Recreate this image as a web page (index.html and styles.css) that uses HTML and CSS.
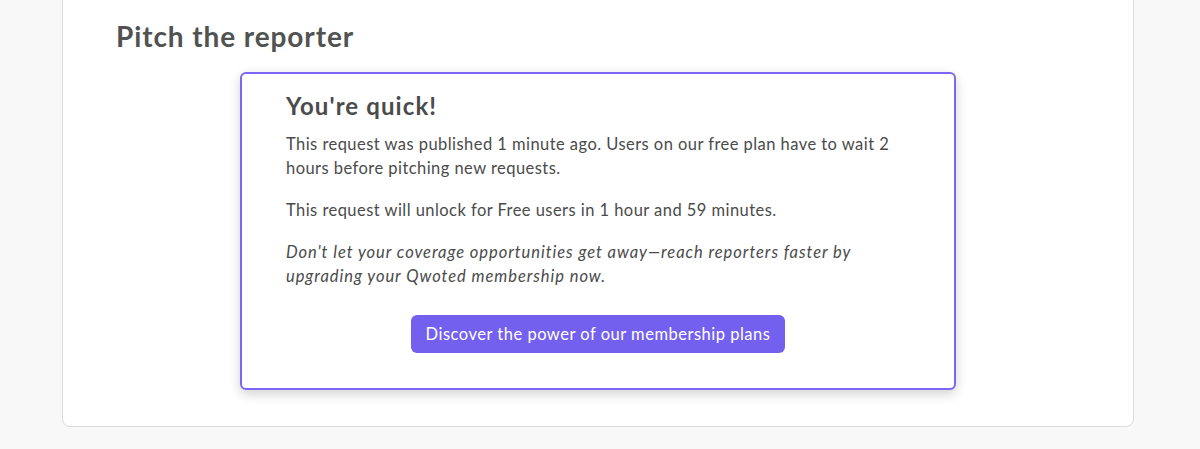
FILE: index.html
```html
<!DOCTYPE html>
<html lang="en">

<head>
    <meta charset="UTF-8">
    <meta name="viewport" content="width=device-width, initial-scale=1.0">
    <title>Pitch the reporter</title>
    <link rel="stylesheet" href="styles.css">
</head>

<body>
    <div class="page">
        <section class="panel">
            <h2 class="panel-title">Pitch the reporter</h2>

            <div class="notice">
                <h3 class="notice-title">You're quick!</h3>
                <p>This request was published 1 minute ago. Users on our free plan have to wait 2 hours before pitching new requests.</p>
                <p>This request will unlock for Free users in 1 hour and 59 minutes.</p>
                <p class="note">Don't let your coverage opportunities get away—reach reporters faster by upgrading your Qwoted membership now.</p>
                <div class="actions">
                    <a href="#" class="btn">Discover the power of our membership plans</a>
                </div>
            </div>
        </section>
    </div>
</body>

</html>
```

FILE: styles.css
```css
body {
    margin: 0;
    background-color: #f8f8f8;
    font-family: Lato, "Open Sans", Arial, sans-serif;
    color: #4a4b4b;
}

.page {
    padding: 0 66px 22px 62px;
}

.panel {
    margin-top: -10px;
    background-color: #fff;
    border: 1px solid #dcdcdc;
    border-radius: 0 0 8px 8px;
    padding: 28px 0 36px 53px;
}

.panel-title {
    margin: 0 0 19px 0;
    font-size: 28px;
    font-weight: 700;
    line-height: 34px;
    letter-spacing: 0.9px;
    color: #505352;
}

.notice {
    margin-left: 124px;
    width: 624px;
    padding: 17px 44px 35px 44px;
    border: 2px solid #7b66f5;
    border-radius: 6px;
    box-shadow: 0px 4px 12px rgba(0, 0, 0, 0.18);
    background-color: #fff;
}

.notice-title {
    margin: 0 0 11px 0;
    font-size: 24px;
    font-weight: 700;
    line-height: 30px;
    letter-spacing: 1.1px;
}

.notice p {
    margin: 0 0 18px 0;
    font-size: 16.5px;
    line-height: 24px;
    letter-spacing: 0.45px;
}

.notice p.note {
    font-style: italic;
    letter-spacing: 0.95px;
    margin-bottom: 27px;
}

.actions {
    text-align: center;
}

.btn {
    display: inline-block;
    padding: 7px 15px;
    font-size: 16.5px;
    line-height: 24px;
    letter-spacing: 0.5px;
    color: #fff;
    background-color: #7360ef;
    border-radius: 6px;
    text-decoration: none;
}
```
